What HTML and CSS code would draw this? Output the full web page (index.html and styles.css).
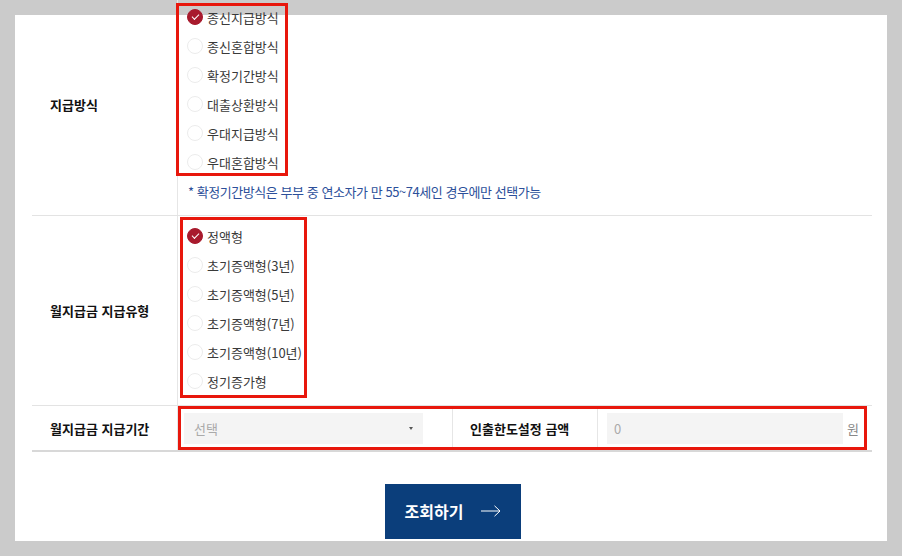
FILE: index.html
```html
<!DOCTYPE html>
<html lang="ko">
<head>
  <meta charset="UTF-8" />
  <title>연금 조회</title>
  <link rel="stylesheet" href="styles.css">
</head>
<body>
  <div class="panel">
    <div class="form-table">

      <!-- 지급방식 -->
      <div class="form-row row-method">
        <div class="label">지급방식</div>
        <div class="value">
          <div class="mark mark-method">
            <label class="radio checked"><span class="dot"></span>종신지급방식</label>
            <label class="radio"><span class="dot"></span>종신혼합방식</label>
            <label class="radio"><span class="dot"></span>확정기간방식</label>
            <label class="radio"><span class="dot"></span>대출상환방식</label>
            <label class="radio"><span class="dot"></span>우대지급방식</label>
            <label class="radio"><span class="dot"></span>우대혼합방식</label>
          </div>
          <p class="note">* 확정기간방식은 부부 중 연소자가 만 55~74세인 경우에만 선택가능</p>
        </div>
      </div>

      <!-- 월지급금 지급유형 -->
      <div class="form-row row-type">
        <div class="label">월지급금 지급유형</div>
        <div class="value">
          <div class="mark mark-type">
            <label class="radio checked"><span class="dot"></span>정액형</label>
            <label class="radio"><span class="dot"></span>초기증액형(3년)</label>
            <label class="radio"><span class="dot"></span>초기증액형(5년)</label>
            <label class="radio"><span class="dot"></span>초기증액형(7년)</label>
            <label class="radio"><span class="dot"></span>초기증액형(10년)</label>
            <label class="radio"><span class="dot"></span>정기증가형</label>
          </div>
        </div>
      </div>

      <!-- 지급기간 / 인출한도 -->
      <div class="form-row row-period">
        <div class="label">월지급금 지급기간</div>
        <div class="mark mark-period">
          <div class="cell cell-select">
            <div class="select">선택<span class="caret"></span></div>
          </div>
          <div class="label label-inner">인출한도설정 금액</div>
          <div class="cell cell-amount">
            <div class="input">0</div>
            <span class="unit">원</span>
          </div>
        </div>
      </div>

    </div>

    <div class="actions">
      <button class="btn-search">조회하기
        <svg width="20" height="12" viewBox="0 0 20 12" fill="none" stroke="#fff" stroke-width="1">
          <path d="M0 6h19M13.5 0.8L19 6l-5.5 5.2"/>
        </svg>
      </button>
    </div>
  </div>
</body>
</html>
```

FILE: styles.css
```css
body {
  margin: 0;
  background: #cbcbcb;
  font-family: "Noto Sans CJK KR", "Noto Sans", sans-serif;
  font-size: 13px;
  color: #444;
  height: 556px;
  overflow: hidden;
}

.panel {
  display: flow-root;
  margin: 15px 0 0 15px;
  width: 872px;
  height: 526px;
  box-sizing: border-box;
  padding: 0 15px 0 17px;
  background: #fff;
}

.form-table {
  margin-top: -22px;
  border-bottom: 2px solid #d8d8d8;
}

.form-row {
  display: grid;
  grid-template-columns: 146px 1fr;
  border-bottom: 1px solid #e3e3e3;
}

.form-row:last-child {
  border-bottom: none;
}

.label {
  display: flex;
  align-items: center;
  box-sizing: border-box;
  padding-left: 18px;
  border-right: 1px solid #e6e6e6;
  font-weight: bold;
  color: #111;
}

.mark {
  border: 3px solid #e8170c;
  box-sizing: border-box;
}

/* radios */
.mark-method,
.mark-type {
  display: flex;
  flex-direction: column;
  gap: 7px;
}

.radio {
  display: flex;
  align-items: center;
  height: 22px;
  gap: 4px;
  white-space: nowrap;
  color: #3a3a3a;
}

.dot {
  width: 16px;
  height: 16px;
  box-sizing: border-box;
  border-radius: 50%;
  border: 1px solid #ececec;
  background: #fff;
  position: relative;
}

.radio.checked .dot {
  background: #a81a2d;
  border-color: #a81a2d;
}

.radio.checked .dot::after {
  content: "";
  position: absolute;
  left: 4px;
  top: 3.5px;
  width: 6px;
  height: 3px;
  border-left: 1.6px solid #fff;
  border-bottom: 1.6px solid #fff;
  transform: rotate(-45deg);
}

.row-method .value {
  padding: 10px 0 13px;
}

.mark-method {
  width: 112px;
  margin-left: -2px;
  padding: 0 0 0 8px;
}

.note {
  margin: 6px 0 0 10px;
  line-height: 20px;
  letter-spacing: -0.45px;
  color: #2c4f9a;
}

.row-type .value {
  padding: 1px 0 7px;
}

.mark-type {
  width: 127px;
  margin-left: 2px;
  padding: 5px 0 3px 4px;
}

/* period row */
.row-period {
  height: 44px;
}

.mark-period {
  width: 689px;
  display: grid;
  grid-template-columns: 272px 145px 1fr;
}

.cell {
  display: flex;
  align-items: center;
}

.cell-select {
  border-right: 1px solid #e6e6e6;
  padding-left: 3px;
}

.select {
  width: 239px;
  height: 31px;
  box-sizing: border-box;
  padding: 0 10px 0 10px;
  background: #f4f4f4;
  color: #aaa;
  display: flex;
  align-items: center;
  justify-content: space-between;
}

.caret {
  width: 0;
  height: 0;
  border-left: 2px solid transparent;
  border-right: 2px solid transparent;
  border-top: 3px solid #555;
}

.label-inner {
  padding-left: 17px;
}

.cell-amount {
  padding-left: 9px;
  gap: 4px;
}

.input {
  width: 236px;
  height: 31px;
  box-sizing: border-box;
  padding: 0 7px;
  background: #f4f4f4;
  color: #aaa;
  display: flex;
  align-items: center;
}

.unit {
  color: #888;
}

/* button */
.actions {
  display: flex;
  justify-content: center;
  margin-top: 32px;
  padding-left: 2px;
}

.btn-search {
  width: 136px;
  height: 55px;
  border: none;
  background: #0b3e7b;
  color: #fff;
  font-family: inherit;
  font-size: 16px;
  font-weight: bold;
  display: flex;
  align-items: center;
  justify-content: center;
  gap: 18px;
  padding: 0 0 2px;
}
```
